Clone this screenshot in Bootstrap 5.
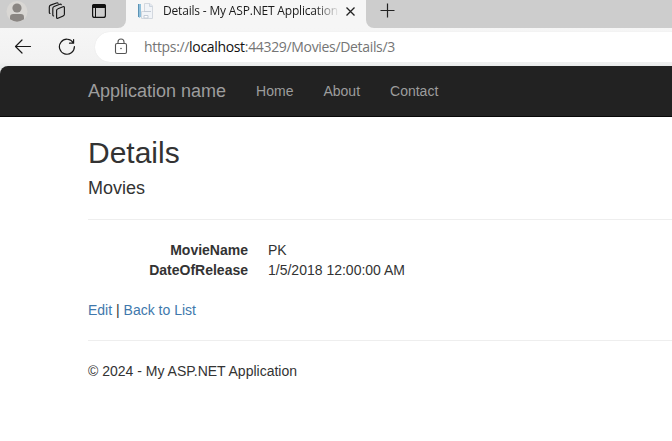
<!DOCTYPE html>
<html lang="en">
<head>
<meta charset="utf-8">
<meta name="viewport" content="width=device-width, initial-scale=1">
<title>Details - My ASP.NET Application</title>
<link href="https://cdn.jsdelivr.net/npm/bootstrap@5.3.0/dist/css/bootstrap.min.css" rel="stylesheet">
<style>
body{font:14px/20px "Liberation Sans",Arial,sans-serif;color:#333;background:#fff;overflow:hidden}
.browser-ui{font-family:"Open Sans","Noto Sans",sans-serif;background:#f6f6f6}
.tab-strip{height:28px}
.strip-left{width:126px;background:#cdcdcd;border-bottom-right-radius:8px}
.strip-right{background:#cdcdcd;border-bottom-left-radius:8px}
.browser-ui svg{display:block;flex:none}
.strip-left svg:nth-child(1){margin:0 0 0 5px}
.strip-left svg:nth-child(2){margin-left:20px}
.strip-left svg:nth-child(3){margin-left:25px}
.open-tab{width:240px;padding-left:11px}
.tab-title{width:175px;height:22px;margin-left:9px;font-size:12px;line-height:22px;letter-spacing:-.18px;color:#1b1b1b;white-space:nowrap;-webkit-mask-image:linear-gradient(to right,#000 152px,transparent 177px);mask-image:linear-gradient(to right,#000 152px,transparent 177px)}
.tool-row{height:38px;padding:4px 0;background:linear-gradient(#f6f6f6,#f2f2f2 34px,#e9ebeb)}
.address{height:30px;margin-left:20px;padding-left:19px;background:#fff;border-radius:15px 0 0 15px;font-size:14px;color:#757575;box-shadow:0 0 1px #ddd}
.url-text{margin-left:15px;letter-spacing:-.33px;line-height:30px;white-space:nowrap}
.url-text span{color:#111}
.page-frame{background:#e9ebeb}
.site-nav{height:51px;background:#222;border-bottom:1px solid #080808;border-top-left-radius:8px;padding:0 0 0 88px}
.site-nav a{color:#9d9d9d}
.site-nav .navbar-brand{font-size:18px;line-height:20px;padding:0;margin:0 30px 0 0}
.site-nav .site-links .nav-link{padding:0;font-size:14px;line-height:20px;color:#9d9d9d}
.site-links{gap:30px}
.page-body{padding:19px 0 0 88px}
h2{font-size:30px;line-height:33px;font-weight:400;margin:0 0 9px}
h4{font-size:18px;line-height:20px;font-weight:400;margin:0}
hr{margin:20px 0;border-top:1px solid #eee;opacity:1}
h4+hr{margin-top:21px}
.fields dt{width:160px}
.page-body a{color:#4078ac}
</style>
<script src="https://cdn.jsdelivr.net/npm/bootstrap@5.3.0/dist/js/bootstrap.bundle.min.js"></script>
</head>
<body>
<header class="browser-ui">
  <div class="tab-strip d-flex">
    <div class="strip-left d-flex">
      <svg width="23" height="24" viewBox="0 0 23 24"><circle cx="12" cy="11.5" r="10.5" fill="#d9d7d4"/><circle cx="12" cy="8" r="4.6" fill="#8a8683"/><path d="M5 19.300V17.200Q5 14 8.200 14H15.800Q19 14 19 17.200V19.300Q12 24 5 19.300Z" fill="#8a8683"/></svg>
      <svg width="18" height="22" viewBox="48 0 18 22" fill="none" stroke="#161616" stroke-width="1.150" stroke-linejoin="round" stroke-linecap="round"><path d="M56.600 10V17.400Q56.600 18.700 57.900 18.300L63.200 15.900Q64.400 15.400 64.400 14.200V7.800Q64.400 6.300 63 6.700L58 8.700Q56.600 9.200 56.600 10.500"/><path d="M53.600 16Q52.800 15.700 52.800 14.900V8.500Q52.800 7 54.100 6.500L59.800 4.200Q61 3.900 61.300 4.700M50 13.500Q49.300 13.200 49.300 12.400V7Q49.300 5.600 50.600 5.100L56.500 3Q57.700 2.700 58.100 3.300"/></svg>
      <svg width="16" height="20" viewBox="91 0 16 20"><rect x="92.600" y="4.600" width="12.800" height="12.800" rx="2" fill="none" stroke="#111" stroke-width="1.200"/><path d="M92 8V6Q92 4 94 4H104Q106 4 106 6V8Z" fill="#111"/><path d="M95.500 8V17" stroke="#111"/></svg>
    </div>
    <div class="open-tab d-flex">
      <svg width="17" height="20" viewBox="137 0 17 20"><path d="M144.500 3.500H150L152.500 6V18.500H141.500V11.500H144.500Z" fill="#f1f4f8" stroke="#d3d8df"/><path d="M149.500 3.500V6.500H152.500" fill="#e0e6ee" stroke="#ccd4de"/><path d="M138 4H141V16.500L139.500 18 138 16.500Z" fill="#8fc0dc"/><path d="M138 4H139V17H138Z" fill="#5b93b5"/><path d="M144 11.500H151M144 15.500H148V18H144Z" fill="#fff" stroke="#c3cbd6"/></svg>
      <div class="tab-title">Details - My ASP.NET Application</div>
      <svg width="12" height="20" viewBox="344 0 12 20" class="ms-2"><path d="M344.500 7.500 352.500 15.500M352.500 7.500 344.500 15.500" stroke="#222" stroke-width="1.300"/></svg>
    </div>
    <div class="strip-right flex-grow-1">
      <svg width="32" height="20" viewBox="366 0 32 20"><path d="M380.500 10.500H394.500M387.500 3.500V17.500" stroke="#222" stroke-width="1.200"/></svg>
    </div>
  </div>
  <div class="tool-row d-flex">
    <svg width="75" height="30" viewBox="0 32 75 30" fill="none" stroke="#191919" stroke-width="1.200" stroke-linecap="round" stroke-linejoin="round"><path d="M30.500 46.500H15.500M22 40 15.500 46.500 22 53"/><path d="M73.300 42.800A7.500 7.500 0 1 0 74.400 46.500M73.600 39.500V43.200H69.500"/></svg>
    <div class="address d-flex flex-grow-1">
      <svg width="15" height="30" viewBox="114 32 15 30" fill="none" stroke="#555" stroke-width="1.100"><rect x="115.500" y="43.500" width="11" height="10" rx="1.500"/><path d="M118 43.500V42Q118 39 121 39T124 42V43.500"/><circle cx="121" cy="48.500" r=".8" fill="#555" stroke="none"/></svg>
      <div class="url-text">https://<span>localhost</span>:44329/Movies/Details/3</div>
    </div>
  </div>
</header>
<div class="page-frame">
  <nav class="site-nav navbar navbar-expand justify-content-start">
    <a class="navbar-brand" href="#">Application name</a>
    <div class="navbar-nav site-links">
      <a class="nav-link" href="#">Home</a>
      <a class="nav-link" href="#">About</a>
      <a class="nav-link" href="#">Contact</a>
    </div>
  </nav>
</div>
<main class="page-body">
  <h2>Details</h2>
  <h4>Movies</h4>
  <hr>
  <dl class="fields mb-0">
    <div class="d-flex"><dt class="text-end">MovieName</dt><dd class="mb-0 ms-3 ps-1">PK</dd></div>
    <div class="d-flex"><dt class="text-end">DateOfRelease</dt><dd class="mb-0 ms-3 ps-1">1/5/2018 12:00:00 AM</dd></div>
  </dl>
  <p class="mb-0 mt-3 pt-1"><a href="#" class="text-decoration-none">Edit</a> | <a href="#" class="text-decoration-none">Back to List</a></p>
  <hr>
  <footer>© 2024 - My ASP.NET Application</footer>
</main>
</body>
</html>
